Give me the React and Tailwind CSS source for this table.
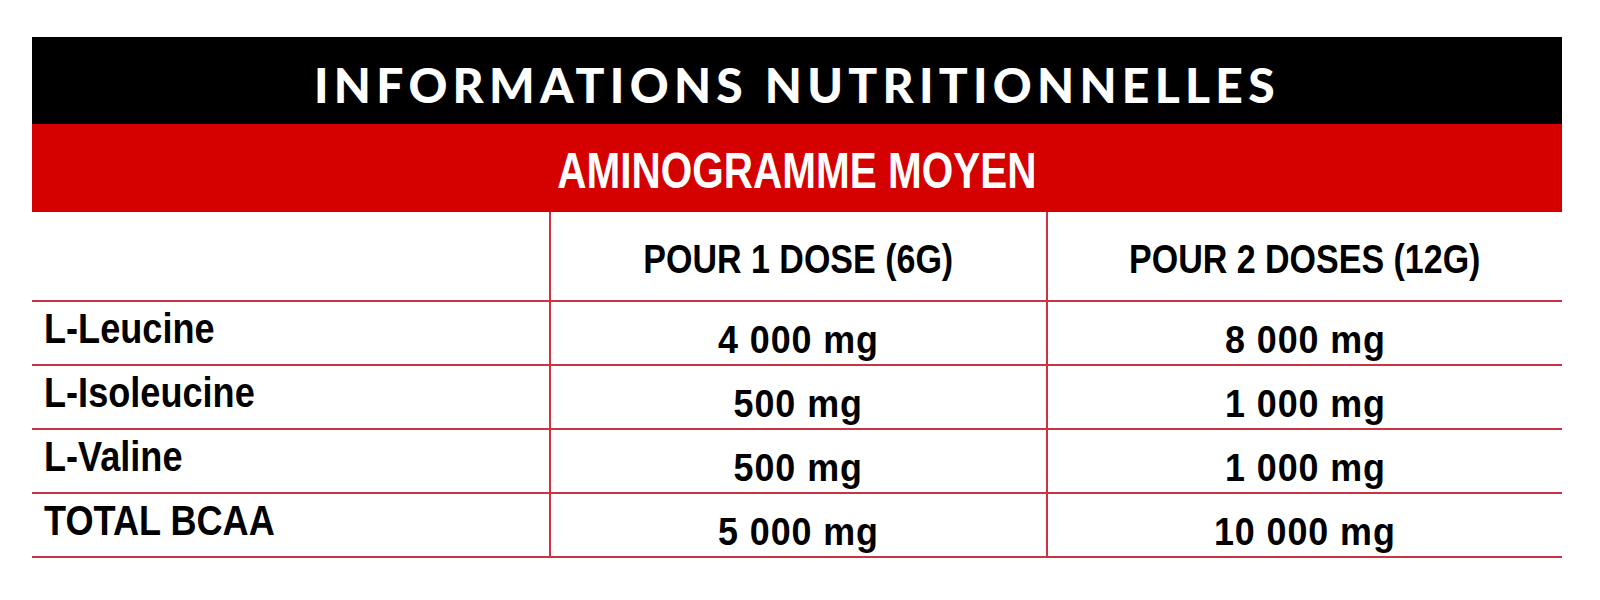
import React from "react";

const rows = [
  { label: "L-Leucine", one: "4 000 mg", two: "8 000 mg" },
  { label: "L-Isoleucine", one: "500 mg", two: "1 000 mg" },
  { label: "L-Valine", one: "500 mg", two: "1 000 mg" },
  { label: "TOTAL BCAA", one: "5 000 mg", two: "10 000 mg" },
];

// no condensed face installed, so Liberation Sans Bold squeezed horizontally
const narrow = "font-['Liberation_Sans',Arial,sans-serif] font-bold";
const line = "border-[#cc3340]";

export default function App() {
  return (
    <div className="min-h-screen bg-white pt-[37px] pl-[32px] text-black">
      <div className="w-[1530px]">
        {/* title band */}
        <div className="h-[87px] bg-black flex items-center justify-center pt-[8px]">
          <h1 className="font-['Lato','Open_Sans',sans-serif] font-black text-[48px] leading-none tracking-[0.11em] text-white">
            INFORMATIONS NUTRITIONNELLES
          </h1>
        </div>
        <div className="h-[88px] bg-[#d50000] flex items-center justify-center pt-[6px]">
          <h2 className={`${narrow} text-[50px] leading-none text-white inline-block scale-x-[0.81]`}>
            AMINOGRAMME MOYEN
          </h2>
        </div>

        {/* table */}
        <div className="grid grid-cols-[517px_497px_516px]">
          <div className={`h-[90px] border-b-2 ${line}`} />
          {["POUR 1 DOSE (6G)", "POUR 2 DOSES (12G)"].map((h) => (
            <div
              key={h}
              className={`h-[90px] border-b-2 border-l-2 ${line} flex items-center justify-center pt-[6px]`}
            >
              <span className={`${narrow} text-[40px] leading-none inline-block scale-x-[0.85]`}>{h}</span>
            </div>
          ))}

          {rows.map((r) => (
            <React.Fragment key={r.label}>
              <div className={`h-[64px] border-b-2 ${line} flex items-center pl-[12px] pb-[10px]`}>
                <span className={`${narrow} text-[43px] leading-none inline-block scale-x-[0.84] origin-left whitespace-nowrap`}>
                  {r.label}
                </span>
              </div>
              {[r.one, r.two].map((v, i) => (
                <div
                  key={i}
                  className={`h-[64px] border-b-2 border-l-2 ${line} flex items-center justify-center pt-[12px]`}
                >
                  <span className={`${narrow} text-[39px] leading-none tracking-[1px] inline-block scale-x-[0.92] whitespace-nowrap`}>
                    {v}
                  </span>
                </div>
              ))}
            </React.Fragment>
          ))}
        </div>
      </div>
    </div>
  );
}
